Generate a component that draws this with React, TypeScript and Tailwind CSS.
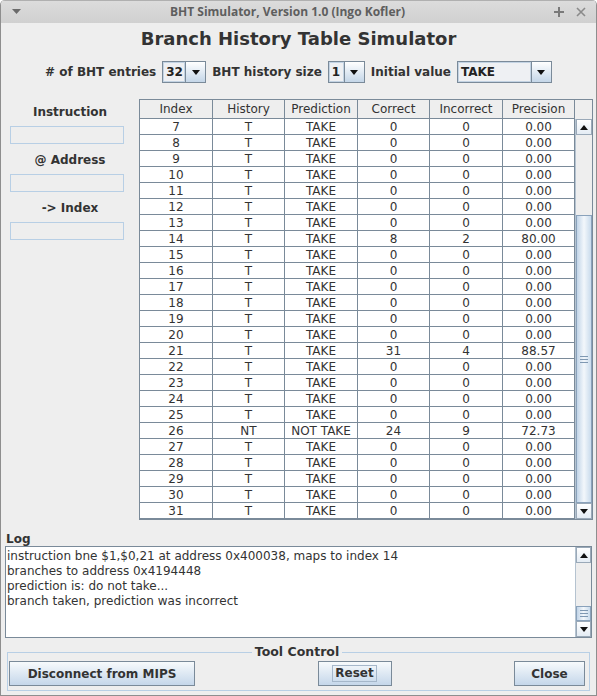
const rows: [number, string, string, number, number, string][] = [
  [7, "T", "TAKE", 0, 0, "0.00"],
  [8, "T", "TAKE", 0, 0, "0.00"],
  [9, "T", "TAKE", 0, 0, "0.00"],
  [10, "T", "TAKE", 0, 0, "0.00"],
  [11, "T", "TAKE", 0, 0, "0.00"],
  [12, "T", "TAKE", 0, 0, "0.00"],
  [13, "T", "TAKE", 0, 0, "0.00"],
  [14, "T", "TAKE", 8, 2, "80.00"],
  [15, "T", "TAKE", 0, 0, "0.00"],
  [16, "T", "TAKE", 0, 0, "0.00"],
  [17, "T", "TAKE", 0, 0, "0.00"],
  [18, "T", "TAKE", 0, 0, "0.00"],
  [19, "T", "TAKE", 0, 0, "0.00"],
  [20, "T", "TAKE", 0, 0, "0.00"],
  [21, "T", "TAKE", 31, 4, "88.57"],
  [22, "T", "TAKE", 0, 0, "0.00"],
  [23, "T", "TAKE", 0, 0, "0.00"],
  [24, "T", "TAKE", 0, 0, "0.00"],
  [25, "T", "TAKE", 0, 0, "0.00"],
  [26, "NT", "NOT TAKE", 24, 9, "72.73"],
  [27, "T", "TAKE", 0, 0, "0.00"],
  [28, "T", "TAKE", 0, 0, "0.00"],
  [29, "T", "TAKE", 0, 0, "0.00"],
  [30, "T", "TAKE", 0, 0, "0.00"],
  [31, "T", "TAKE", 0, 0, "0.00"],
];

const widths = ["w-[73px]", "w-[72px]", "w-[73px]", "w-[72px]", "w-[73px]", "w-[72px]"];
const headers = ["Index", "History", "Prediction", "Correct", "Incorrect", "Precision"];

function Tri({ up = false }: { up?: boolean }) {
  return (
    <svg width="8" height="5" viewBox="0 0 8 5" className="block">
      <path d={up ? "M0 5 L4 0 L8 5 Z" : "M0 0 L8 0 L4 5 Z"} fill="#111" />
    </svg>
  );
}

function ScrollButton({ up = false }: { up?: boolean }) {
  return (
    <div className="h-[16px] flex items-center justify-center bg-gradient-to-b from-white to-[#e4ecf4] border border-[#9aa9b8]">
      <Tri up={up} />
    </div>
  );
}

function Thumb({ className }: { className: string }) {
  return (
    <div className={`${className} border border-[#8aa2bb] bg-gradient-to-r from-[#c2d5e8] via-[#f3f7fb] to-[#c9dbec] flex flex-col items-center justify-center gap-[2px]`}>
      <div className="w-[8px] h-px bg-[#7f98b2]" />
      <div className="w-[8px] h-px bg-[#7f98b2]" />
      <div className="w-[8px] h-px bg-[#7f98b2]" />
    </div>
  );
}

function Combo({ value, w }: { value: string; w: string }) {
  return (
    <div className={`${w} h-[22px] flex border border-[#7a8a99]`}>
      <div className="flex-1 border border-[#c3d3e3] bg-[#eef0f3] flex items-center pl-[2px] font-bold text-[#222]">
        {value}
      </div>
      <div className="w-[20px] flex items-center justify-center border-l border-[#7a8a99] bg-gradient-to-b from-white to-[#c4d6e8]">
        <Tri />
      </div>
    </div>
  );
}

function Field() {
  return <div className="ml-[9px] w-[114px] h-[18px] border border-[#b8cfe5] bg-[#eeeeee]" />;
}

function Button({ label, w, focus = false }: { label: string; w: string; focus?: boolean }) {
  return (
    <button className={`${w} h-[25px] border border-[#7a8a99] bg-gradient-to-b from-[#f7fafc] to-[#c5d7ea] font-bold text-[12px] text-[#333] flex items-center justify-center`}>
      <span className={focus ? "border border-[#a5b7ca] px-[2px] h-[17px] leading-[15px]" : ""}>{label}</span>
    </button>
  );
}

export default function App() {
  return (
    <div
      className="w-[597px] h-[696px] bg-[#eeeeee] border-x border-b border-[#8e8e8e] rounded-t-[5px] overflow-hidden flex flex-col text-[12px] text-[#333]"
      style={{ fontFamily: '"DejaVu Sans", sans-serif' }}
    >
      <div className="h-[23px] shrink-0 flex items-center bg-gradient-to-b from-[#dcdcdc] to-[#d0d0d0] border-t border-[#b0b0b0] px-[10px]">
        <svg width="9" height="6" viewBox="0 0 9 6" className="ml-px">
          <path d="M0 0 L9 0 L4.5 5 Z" fill="#6a6a6a" />
        </svg>
        <div className="flex-1 text-center text-[12px] font-bold text-[#5e5e5e]" style={{ fontFamily: '"Open Sans", sans-serif' }}>
          BHT Simulator, Version 1.0 (Ingo Kofler)
        </div>
        <div className="flex items-center gap-[12px] text-[#777]">
          <svg width="10" height="10" viewBox="0 0 10 10">
            <path d="M5 0 V10 M0 5 H10" stroke="#7a7a7a" strokeWidth="2" />
          </svg>
          <svg width="10" height="10" viewBox="0 0 10 10">
            <path d="M1 1 L9 9 M9 1 L1 9" stroke="#8a8a8a" strokeWidth="1.6" />
          </svg>
        </div>
      </div>

      <h1 className="mt-[5px] h-[22px] leading-[22px] text-center text-[18px] font-bold text-[#333]">
        Branch History Table Simulator
      </h1>

      <div className="mt-[11px] h-[22px] flex items-center justify-center gap-[6px] font-bold text-[12px] text-[#333]">
        <span># of BHT entries</span>
        <Combo value="32" w="w-[44px]" />
        <span>BHT history size</span>
        <Combo value="1" w="w-[37px]" />
        <span>Initial value</span>
        <Combo value="TAKE" w="w-[95px]" />
      </div>

      <div className="mt-[16px] h-[421px] flex">
        <div className="w-[138px] pt-[5px] flex flex-col font-bold text-[12px]">
          <div className="h-[16px] leading-[16px] text-center">Instruction</div>
          <div className="mt-[6px]"><Field /></div>
          <div className="mt-[8px] h-[16px] leading-[16px] text-center">@ Address</div>
          <div className="mt-[6px]"><Field /></div>
          <div className="mt-[8px] h-[16px] leading-[16px] text-center">-&gt; Index</div>
          <div className="mt-[6px]"><Field /></div>
        </div>

        <div className="w-[454px] border border-[#7a8a99] flex bg-[#eeeeee]">
          <div className="w-[435px] flex flex-col">
            <div className="h-[19px] flex border-b border-[#7a8a99]">
              {headers.map((h, i) => (
                <div key={h} className={`${widths[i]} border-r border-[#7a8a99] flex items-center justify-center leading-[18px]`}>
                  {h}
                </div>
              ))}
            </div>
            <div className="bg-white">
              {rows.map((r) => (
                <div key={r[0]} className="h-[16px] flex border-b border-[#7a8a99]">
                  {r.map((c, i) => (
                    <div key={i} className={`${widths[i]} border-r border-[#7a8a99] flex items-center justify-center leading-[15px] pt-px`}>
                      {c}
                    </div>
                  ))}
                </div>
              ))}
            </div>
          </div>
          <div className="flex-1 flex flex-col">
            <div className="h-[19px]" />
            <div className="flex-1 flex flex-col border-l border-[#b5c3d0]">
              <ScrollButton up />
              <div className="h-[80px]" />
              <Thumb className="h-[288px]" />
              <div className="flex-1" />
              <ScrollButton />
            </div>
          </div>
        </div>
      </div>

      <div className="mt-[12px] h-[14px] leading-[14px] pl-[5px] font-bold text-[12px]">Log</div>
      <div className="ml-[4px] w-[587px] h-[92px] border border-[#7a8a99] bg-white flex">
        <div className="flex-1 pl-[1px] pt-[2px] text-[12px] leading-[15px] text-[#333]">
          <div>instruction bne $1,$0,21 at address 0x400038, maps to index 14</div>
          <div>branches to address 0x4194448</div>
          <div>prediction is: do not take...</div>
          <div>branch taken, prediction was incorrect</div>
        </div>
        <div className="w-[16px] flex flex-col border-l border-[#b5c3d0] bg-[#eeeeee]">
          <ScrollButton up />
          <div className="flex-1" />
          <Thumb className="h-[15px]" />
          <ScrollButton />
        </div>
      </div>

      <fieldset className="mt-[7px] mx-[6px] border border-[#b8cfe5] pl-px pr-[4px] pb-[4px] flex">
        <legend className="mx-auto px-[3px] font-bold text-[12.5px] leading-[14px]">Tool Control</legend>
        <div className="mt-[2px] w-full flex justify-between">
          <Button label="Disconnect from MIPS" w="w-[186px]" />
          <Button label="Reset" w="w-[74px]" focus />
          <Button label="Close" w="w-[71px]" />
        </div>
      </fieldset>
    </div>
  );
}
